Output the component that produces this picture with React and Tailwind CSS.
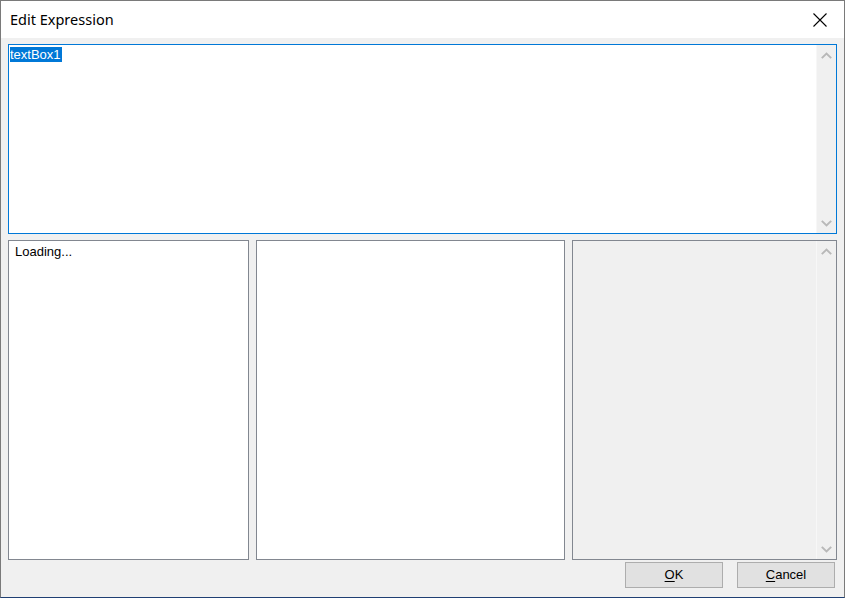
import React from 'react';

function Chevron({ dir = 'up' }) {
  return (
    <svg width="11" height="7" viewBox="0 0 11 7" className="block">
      {dir === 'up' ? (
        <path d="M0.8 6.2 L5.5 1.5 L10.2 6.2" fill="none" stroke="#b8b8b8" strokeWidth="1.9" />
      ) : (
        <path d="M0.8 0.8 L5.5 5.5 L10.2 0.8" fill="none" stroke="#b8b8b8" strokeWidth="1.9" />
      )}
    </svg>
  );
}

function ScrollBar() {
  return (
    <div className="w-[20px] h-full bg-[#f0f0f0] border-l border-[#f7f7f7] flex flex-col justify-between items-center shrink-0">
      <div className="h-[20px] flex items-center justify-center">
        <Chevron dir="up" />
      </div>
      <div className="h-[20px] flex items-center justify-center">
        <Chevron dir="down" />
      </div>
    </div>
  );
}

export default function App() {
  return (
    <div
      className="w-[845px] h-[598px] bg-[#f0f0f0] border border-[#7a7a7a] border-b-[#1f3f73] flex flex-col overflow-hidden"
      style={{ fontFamily: '"Liberation Sans", Arial, sans-serif' }}
    >
      {/* Title bar */}
      <div className="h-[37px] bg-white flex items-center justify-between shrink-0">
        <span className="pl-[9px] text-[14.5px] text-black" style={{ fontFamily: '"Noto Sans", "Open Sans", sans-serif' }}>
          Edit Expression
        </span>
        <div className="w-[46px] h-full flex items-center justify-center mr-[1px]">
          <svg width="14" height="14" viewBox="0 0 14 14">
            <path d="M0.5 0.5 L13.5 13.5 M13.5 0.5 L0.5 13.5" stroke="#000" strokeWidth="1.1" />
          </svg>
        </div>
      </div>

      {/* Body */}
      <div className="flex-1 flex flex-col px-[7px] pt-[6px]">
        {/* Expression editor */}
        <div className="h-[190px] border border-[#0078d7] bg-white flex shrink-0">
          <div className="flex-1 pl-[1px] pt-[1px] leading-[15px]">
            <span className="bg-[#0078d7] text-white text-[13px] leading-[15px] inline-block pr-[1px]">textBox1</span>
          </div>
          <ScrollBar />
        </div>

        {/* Lower panels */}
        <div className="h-[320px] mt-[6px] flex gap-[7px] shrink-0">
          <div className="w-[241px] border border-[#828790] bg-white px-[6px] pt-[1px] leading-[17px]">
            <span className="text-[13px] text-black">Loading...</span>
          </div>
          <div className="w-[309px] border border-[#828790] bg-white" />
          <div className="flex-1 border border-[#828790] bg-[#f0f0f0] flex justify-end">
            <ScrollBar />
          </div>
        </div>

        {/* Buttons */}
        <div className="flex justify-end gap-[14px] mt-[2px] pr-[2px]">
          <button className="w-[98px] h-[26px] bg-[#e1e1e1] border border-[#adadad] text-[13px] text-black">
            <span className="underline underline-offset-2">O</span>K
          </button>
          <button className="w-[98px] h-[26px] bg-[#e1e1e1] border border-[#adadad] text-[13px] text-black">
            <span className="underline underline-offset-2">C</span>ancel
          </button>
        </div>
      </div>
    </div>
  );
}
